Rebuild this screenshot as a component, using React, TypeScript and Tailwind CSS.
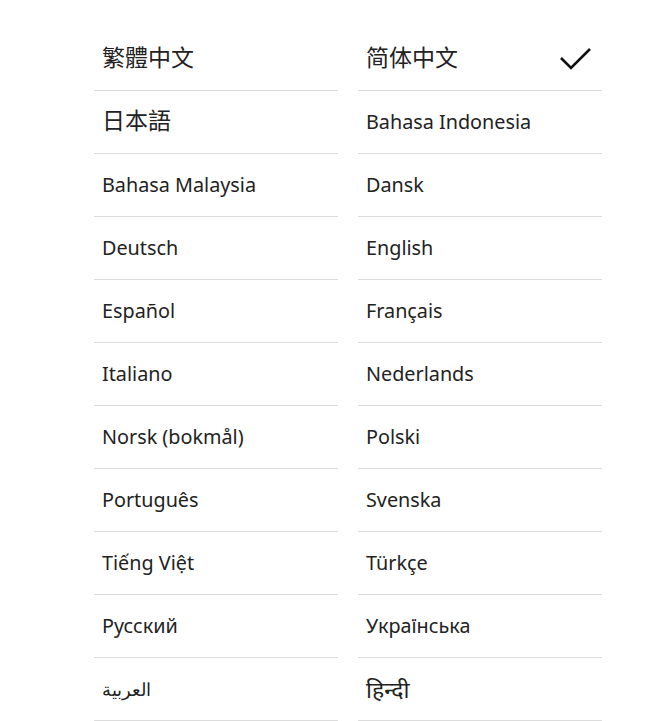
const languages: [string, string][] = [
  ["繁體中文", "简体中文"],
  ["日本語", "Bahasa Indonesia"],
  ["Bahasa Malaysia", "Dansk"],
  ["Deutsch", "English"],
  ["Español", "Français"],
  ["Italiano", "Nederlands"],
  ["Norsk (bokmål)", "Polski"],
  ["Português", "Svenska"],
  ["Tiếng Việt", "Türkçe"],
  ["Русский", "Українська"],
  ["العربية", "हिन्दी"],
];

const selected = "简体中文";

function sizeFor(label: string) {
  if (/[\u3040-\u9fff]/.test(label)) return "text-[23px] -translate-y-[2px]";
  if (/[\u0900-\u097f]/.test(label)) return "text-[23px]";
  if (/[\u0600-\u06ff]/.test(label)) return "text-[18px]";
  return "text-[19.8px]";
}

function Item({ label }: { label: string }) {
  return (
    <div className="h-[63px] border-b border-[#dcdcdc] px-2 flex items-center justify-between">
      <span
        className={`text-[#222] ${sizeFor(label)}`}
        style={{ fontFamily: '"Noto Sans", "Noto Sans CJK TC", sans-serif' }}
      >
        {label}
      </span>
      {label === selected && (
        <svg width="32" height="24" viewBox="0 0 32 24" className="mr-[3px] text-[#111]">
          <polyline
            points="2,11 12,21 31,2"
            fill="none"
            stroke="currentColor"
            strokeWidth="2.6"
          />
        </svg>
      )}
    </div>
  );
}

export default function App() {
  return (
    <div className="w-[652px] h-[721px] bg-white overflow-hidden">
      <div className="pt-[28px] pl-[94px] w-[602px] grid grid-cols-2 gap-x-5">
        {languages.map(([left, right], i) => (
          <div key={i} className="contents">
            <Item label={left} />
            <Item label={right} />
          </div>
        ))}
      </div>
    </div>
  );
}
